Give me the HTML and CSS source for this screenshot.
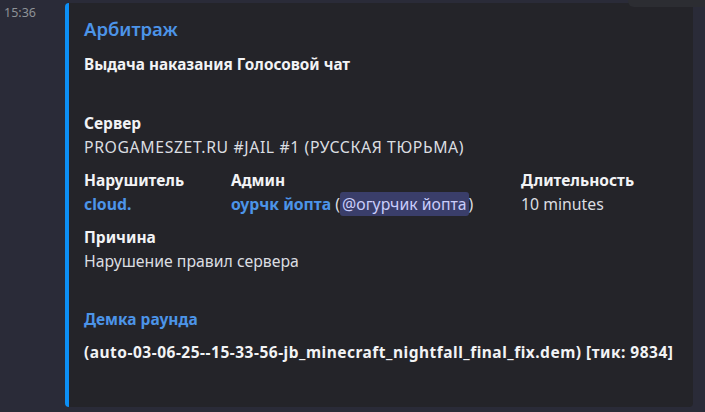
FILE: index.html
```html
<!DOCTYPE html>
<html lang="ru">
<head>
<meta charset="utf-8">
<link rel="stylesheet" href="styles.css">
</head>
<body>
<div class="toolbar-edge"></div>
<div class="message">
  <div class="gutter"><span class="time">15:36</span></div>
  <div class="embed">
    <div class="title">Арбитраж</div>
    <div class="desc">Выдача наказания Голосовой чат</div>
    <div class="fields">
      <div class="field full">
        <div class="fname">Сервер</div>
        <div class="fvalue caps">PROGAMESZET.RU #JAIL #1 (РУССКАЯ ТЮРЬМА)</div>
      </div>
      <div class="field">
        <div class="fname">Нарушитель</div>
        <div class="fvalue"><span class="link">cloud.</span></div>
      </div>
      <div class="field">
        <div class="fname">Админ</div>
        <div class="fvalue"><span class="link">оурчк йопта</span> (<span class="mention">@огурчик йопта</span>)</div>
      </div>
      <div class="field">
        <div class="fname">Длительность</div>
        <div class="fvalue">10 minutes</div>
      </div>
      <div class="field full">
        <div class="fname">Причина</div>
        <div class="fvalue">Нарушение правил сервера</div>
      </div>
      <div class="field full demo">
        <div class="fname link">Демка раунда</div>
        <div class="fvalue strong">(auto-03-06-25--15-33-56-jb_minecraft_nightfall_final_fix.dem) [тик: 9834]</div>
      </div>
    </div>
  </div>
</div>
</body>
</html>
```
FILE: styles.css
```css
html, body {
  margin: 0;
  padding: 0;
  background: #2a2b38;
  height: 100%;
  overflow: hidden;
}
body {
  font-family: "Noto Sans", "Open Sans", sans-serif;
  color: #dbdee1;
  position: relative;
}
.toolbar-edge {
  position: absolute;
  top: -8px;
  left: 628px;
  width: 90px;
  height: 15px;
  background: #2c2d32;
  border-radius: 6px;
}
.message {
  display: flex;
  padding-top: 3px;
}
.gutter {
  width: 65px;
  flex: none;
}
.time {
  display: block;
  margin-left: 4px;
  margin-top: 2px;
  font-size: 12.5px;
  line-height: 16px;
  color: #8e9297;
}
.embed {
  width: 628px;
  height: 404px;
  box-sizing: border-box;
  background: #242429;
  border-left: 4px solid #0c8ff5;
  border-radius: 4px;
  padding: 15px 15px 0 15px;
}
.title {
  font-size: 18.5px;
  font-weight: 600;
  line-height: 22px;
  color: #4c94e8;
}
.desc {
  font-size: 15.3px;
  font-weight: 700;
  line-height: 20px;
  color: #f2f3f5;
  margin-top: 14px;
}
.fields {
  display: grid;
  grid-template-columns: 147px 290px auto;
  margin-top: 39px;
  row-gap: 13px;
}
.field.full {
  grid-column: 1 / -1;
}
.fname {
  font-size: 15.5px;
  font-weight: 700;
  line-height: 20px;
  color: #f2f3f5;
}
.fvalue {
  font-size: 15.8px;
  line-height: 20px;
  margin-top: 4px;
  color: #dbdee1;
  white-space: nowrap;
}
.fvalue.caps {
  letter-spacing: 0.6px;
}
.link {
  color: #4c94e8;
  font-weight: 700;
}
.mention {
  background: #3a3e6a;
  color: #c9cdfb;
  border-radius: 3px;
  padding: 1px 2px;
}
.demo {
  margin-top: 25px;
}
.demo .fvalue {
  margin-top: 13px;
}
.strong {
  font-weight: 700;
  color: #f2f3f5;
  font-size: 15.5px;
  letter-spacing: 0.5px;
}
```
